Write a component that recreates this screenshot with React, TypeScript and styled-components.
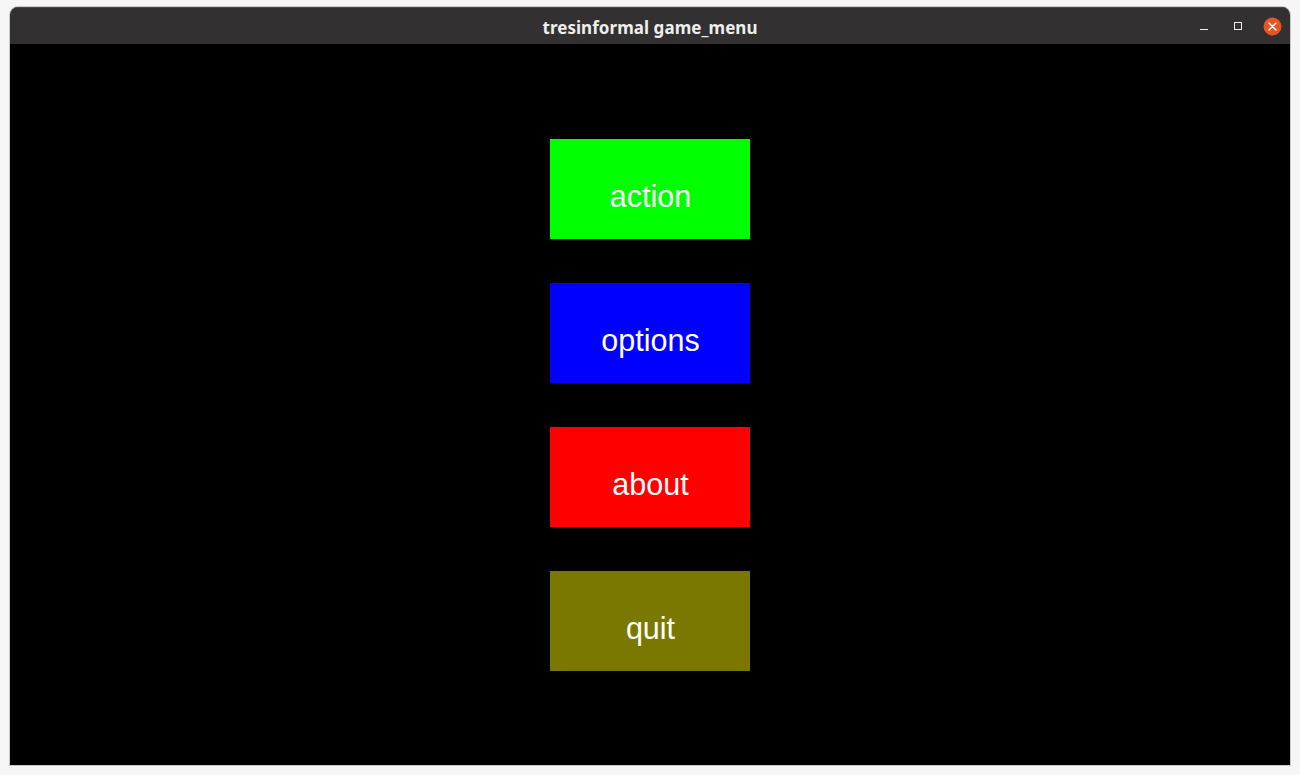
import React from "react";
import styled, { createGlobalStyle } from "styled-components";

const Global = createGlobalStyle`
  html, body { margin: 0; padding: 0; background: #f6f6f6; }
  body { font-family: "Liberation Sans", Arial, sans-serif; }
`;

const Page = styled.div`
  width: 1300px;
  height: 775px;
  padding: 7px 10px 0 10px;
  box-sizing: border-box;
`;

const Window = styled.div`
  width: 1280px;
  height: 758px;
  display: flex;
  flex-direction: column;
  border-radius: 8px 8px 0 0;
  overflow: hidden;
  box-shadow: 0 0 0 1px #c8c8c8;
`;

const TitleBar = styled.div`
  height: 37px;
  flex: none;
  background: #323031;
  display: grid;
  grid-template-columns: 1fr auto 1fr;
  align-items: center;
  border-top: 1px solid #4a4849;
  box-sizing: border-box;
`;

const Title = styled.div`
  grid-column: 2;
  color: #eeeeec;
  font-family: "Noto Sans", "Open Sans", sans-serif;
  font-weight: 700;
  font-size: 17px;
  letter-spacing: 0.05px;
  padding-top: 2px;
`;

const Controls = styled.div`
  grid-column: 3;
  justify-self: end;
  display: flex;
  align-items: center;
  padding-right: 1px;
`;

const Ctrl = styled.div`
  width: 34px;
  height: 20px;
  display: flex;
  align-items: center;
  justify-content: center;
`;

const Content = styled.div`
  flex: 1;
  background: #000;
  display: flex;
  flex-direction: column;
  align-items: center;
  padding-top: 95px;
  gap: 44px;
`;

const MenuButton = styled.div<{ $bg: string }>`
  width: 200px;
  height: 100px;
  background: ${(p) => p.$bg};
  color: #fff;
  font-family: "Liberation Sans", Arial, sans-serif;
  font-size: 30.5px;
  display: flex;
  align-items: flex-start;
  justify-content: center;
  box-sizing: border-box;
  padding-top: 40px;
  line-height: 34px;
  padding-left: 1px;
`;

const items = [
  { label: "action", bg: "#00ff00" },
  { label: "options", bg: "#0000ff" },
  { label: "about", bg: "#ff0000" },
  { label: "quit", bg: "#7a7800" },
];

export default function App() {
  return (
    <>
      <Global />
      <Page>
        <Window>
          <TitleBar>
            <Title>tresinformal game_menu</Title>
            <Controls>
              <Ctrl>
                <svg width="10" height="10" viewBox="0 0 10 10">
                  <rect x="1" y="8" width="8" height="1" fill="#eeeeec" />
                </svg>
              </Ctrl>
              <Ctrl>
                <svg width="10" height="10" viewBox="0 0 10 10">
                  <rect x="1.5" y="1.5" width="7" height="7" fill="none" stroke="#eeeeec" strokeWidth="1" />
                </svg>
              </Ctrl>
              <Ctrl>
                <svg width="19" height="19" viewBox="0 0 19 19">
                  <circle cx="9.5" cy="9.5" r="9" fill="#e95420" />
                  <path d="M6 6 L13 13 M13 6 L6 13" stroke="#fff" strokeWidth="1.4" strokeLinecap="round" />
                </svg>
              </Ctrl>
            </Controls>
          </TitleBar>
          <Content>
            {items.map((it) => (
              <MenuButton key={it.label} $bg={it.bg}>
                {it.label}
              </MenuButton>
            ))}
          </Content>
        </Window>
      </Page>
    </>
  );
}
